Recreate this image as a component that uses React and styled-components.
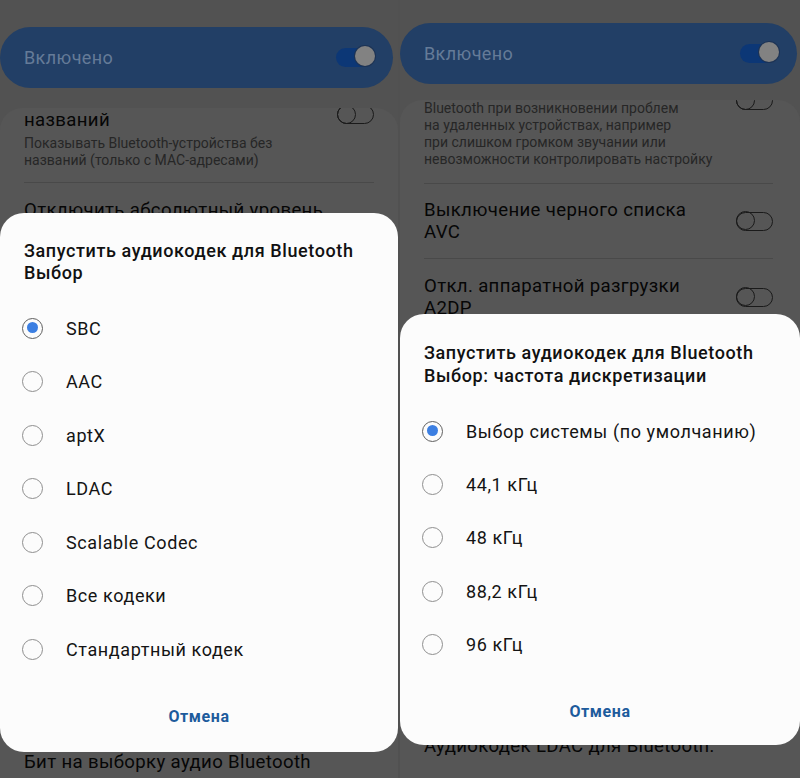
import React from 'react';
import styled, { createGlobalStyle } from 'styled-components';

const GlobalStyle = createGlobalStyle`
  html, body {
    margin: 0;
    padding: 0;
    background: #515151;
  }
  body {
    font-family: Roboto, "Noto Sans", "Liberation Sans", sans-serif;
  }
`;

const Screen = styled.div`
  display: flex;
  gap: 2px;
  width: 800px;
  height: 778px;
  overflow: hidden;
  background: #515151;
`;

const Phone = styled.div`
  position: relative;
  display: flex;
  flex-direction: column;
  width: ${(p) => p.w}px;
  height: 100%;
  overflow: hidden;
  background: #525252;
`;

const Pill = styled.div`
  position: relative;
  z-index: 1;
  display: flex;
  align-items: center;
  justify-content: space-between;
  height: 61px;
  margin: ${(p) => p.top}px ${(p) => p.right}px 0 0;
  padding: 0 20px 0 24px;
  border-radius: 31px;
  background: #223f66;
  color: #657b98;
  font-size: 18px;
  letter-spacing: 0.4px;
`;

const PillToggle = styled.div`
  position: relative;
  width: 37px;
  height: 19px;
  border-radius: 10px;
  background: #0c3776;
  &::after {
    content: '';
    position: absolute;
    right: -2px;
    top: -2px;
    width: 20px;
    height: 20px;
    border-radius: 50%;
    background: #828282;
    box-shadow: 0 0 0 1px #1d3354;
  }
`;

const Card = styled.div`
  flex: 1;
  display: flex;
  flex-direction: column;
  margin: ${(p) => p.top}px 0 0;
  padding: 0 ${(p) => p.right}px 0 24px;
  border-radius: 22px 22px 0 0;
  background: #565656;
  overflow: hidden;
`;

const Row = styled.div`
  display: flex;
  align-items: ${(p) => p.align || 'center'};
  justify-content: space-between;
  gap: 12px;
  padding: ${(p) => p.pad || '0'};
  border-bottom: ${(p) => (p.divider ? '1px solid #494949' : 'none')};
`;

const Texts = styled.div`
  display: flex;
  flex-direction: column;
`;

const Title = styled.div`
  font-size: 18.6px;
  line-height: 22px;
  letter-spacing: 0.35px;
  color: #060606;
  white-space: nowrap;
`;

const Sub = styled.div`
  margin-top: ${(p) => p.mt || 0}px;
  font-size: 14px;
  line-height: 17px;
  color: #262626;
  white-space: nowrap;
`;

const Toggle = styled.div`
  position: relative;
  flex: none;
  width: 37px;
  height: 19px;
  margin-top: ${(p) => p.mt || 0}px;
  border: 1.5px solid #1a1a1a;
  border-radius: 11px;
  box-sizing: border-box;
  &::after {
    content: '';
    position: absolute;
    left: -1.5px;
    top: -1.5px;
    width: 19px;
    height: 19px;
    box-sizing: border-box;
    border: 1.5px solid #1a1a1a;
    border-radius: 50%;
  }
`;

const BottomLine = styled.div`
  margin-top: auto;
  padding-bottom: ${(p) => p.pb}px;
  font-size: 18.6px;
  line-height: 22px;
  letter-spacing: 0.35px;
  color: #060606;
  white-space: nowrap;
`;

const Dialog = styled.div`
  position: absolute;
  z-index: 2;
  left: 0;
  right: 0;
  bottom: ${(p) => p.bottom}px;
  display: flex;
  flex-direction: column;
  padding: 27px 0 ${(p) => p.pb}px;
  border-radius: 24px;
  background: #fcfcfc;
`;

const DialogTitle = styled.div`
  padding: 0 24px;
  margin-bottom: 18px;
  font-size: 18px;
  line-height: ${(p) => p.lh}px;
  letter-spacing: 0.6px;
  font-weight: 500;
  color: #111;
  white-space: nowrap;
`;

const Option = styled.div`
  display: flex;
  align-items: center;
  gap: 23px;
  height: ${(p) => p.h}px;
  padding-left: 22px;
  font-size: 18px;
  letter-spacing: 0.6px;
  color: #141414;
`;

const Radio = styled.span`
  position: relative;
  flex: none;
  width: 21px;
  height: 21px;
  box-sizing: border-box;
  border-radius: 50%;
  border: 1.5px solid ${(p) => (p.on ? '#5f5f5f' : '#8f8f8f')};
  &::after {
    content: '';
    display: ${(p) => (p.on ? 'block' : 'none')};
    position: absolute;
    left: 3.5px;
    top: 3.5px;
    width: 11px;
    height: 11px;
    border-radius: 50%;
    background: #3c7fe2;
  }
`;

const Cancel = styled.div`
  display: flex;
  align-items: center;
  justify-content: center;
  height: 40px;
  margin-top: 20px;
  font-size: 16px;
  letter-spacing: 0.6px;
  font-weight: 700;
  color: #1d5b9c;
`;

const codecs = ['SBC', 'AAC', 'aptX', 'LDAC', 'Scalable Codec', 'Все кодеки', 'Стандартный кодек'];
const rates = ['Выбор системы (по умолчанию)', '44,1 кГц', '48 кГц', '88,2 кГц', '96 кГц'];

const ChoiceDialog = ({ lines, items, rowH, lh, bottom, pb }) => (
  <Dialog bottom={bottom} pb={pb}>
    <DialogTitle lh={lh}>
      {lines.map((l) => (
        <div key={l}>{l}</div>
      ))}
    </DialogTitle>
    {items.map((item, i) => (
      <Option key={item} h={rowH}>
        <Radio on={i === 0} />
        {item}
      </Option>
    ))}
    <Cancel>Отмена</Cancel>
  </Dialog>
);

const App = () => {
  return (
    <>
      <GlobalStyle />
      <Screen>
        {/* левый экран: выбор кодека */}
        <Phone w={398}>
          <Pill top={27} right={5}>
            Включено
            <PillToggle />
          </Pill>
          <Card top={20} right={24}>
            <Row align="flex-start" pad="1px 0 13px" divider>
              <Texts>
                <Title>названий</Title>
                <Sub mt={4}>Показывать Bluetooth-устройства без</Sub>
                <Sub>названий (только с MAC-адресами)</Sub>
              </Texts>
              <Toggle mt={-4} />
            </Row>
            <Row pad="16px 0">
              <Title>Отключить абсолютный уровень</Title>
            </Row>
            <BottomLine pb={5}>Бит на выборку аудио Bluetooth</BottomLine>
          </Card>
          <ChoiceDialog
            lines={['Запустить аудиокодек для Bluetooth', 'Выбор']}
            items={codecs}
            rowH={53.5}
            lh={22}
            bottom={26}
            pb={16}
          />
        </Phone>

        {/* правый экран: частота дискретизации */}
        <Phone w={400}>
          <Pill top={23} right={3}>
            Включено
            <PillToggle />
          </Pill>
          <Card top={16} right={27}>
            <Row align="flex-start" pad="0 0 15px" divider>
              <Texts>
                <Sub>Bluetooth при возникновении проблем</Sub>
                <Sub>на удаленных устройствах, например</Sub>
                <Sub>при слишком громком звучании или</Sub>
                <Sub>невозможности контролировать настройку</Sub>
              </Texts>
              <Toggle mt={-9} />
            </Row>
            <Row pad="15px 0" divider>
              <Texts>
                <Title>Выключение черного списка</Title>
                <Title>AVC</Title>
              </Texts>
              <Toggle />
            </Row>
            <Row pad="16px 0">
              <Texts>
                <Title>Откл. аппаратной разгрузки</Title>
                <Title>A2DP</Title>
              </Texts>
              <Toggle />
            </Row>
            <BottomLine pb={21}>Аудиокодек LDAC для Bluetooth:</BottomLine>
          </Card>
          <ChoiceDialog
            lines={['Запустить аудиокодек для Bluetooth', 'Выбор: частота дискретизации']}
            items={rates}
            rowH={53.3}
            lh={23}
            bottom={33}
            pb={14}
          />
        </Phone>
      </Screen>
    </>
  );
};

export default App;
